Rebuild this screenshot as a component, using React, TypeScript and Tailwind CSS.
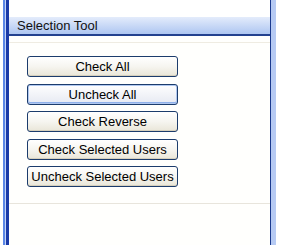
const buttons = [
  "Check All",
  "Uncheck All",
  "Check Reverse",
  "Check Selected Users",
  "Uncheck Selected Users",
];

const XpButton = ({ label, hot }: { label: string; hot?: boolean }) => (
  <button
    className={
      "w-[151px] h-[21px] rounded-[3px] border border-[#1c3c6c] text-[13px] leading-none text-black " +
      (hot
        ? "bg-gradient-to-b from-[#fefefe] to-[#e6e9f2] shadow-[inset_0_0_0_1px_#b0c8f0,inset_0_-1px_0_1px_#8fb0ea]"
        : "bg-gradient-to-b from-[#ffffff] via-[#f6f5f0] to-[#e9e6d8] shadow-[inset_0_-1px_0_#d6d0bd]")
    }
  >
    {label}
  </button>
);

export default function App() {
  return (
    <div className="w-[281px] h-[250px] bg-white font-['Liberation_Sans',Arial,sans-serif]">
      <div className="flex h-[245px]">
        <div className="w-[3px]" />
        <div className="w-[2px] bg-[#5a86e6]" />
        <div className="w-[1px] bg-[#c4d4f6]" />
        <div className="w-[3px] bg-[#1a3aa8]" />

        <div className="w-[261px] flex flex-col bg-[#fffffd]">
          <div className="h-[17px] bg-white" />
          <div className="h-[19px] border-b-2 border-[#23418f] bg-gradient-to-b from-[#e4ecfb] to-[#aec6f1] pl-[8px] flex items-center text-[13px] text-[#111]">
            Selection Tool
          </div>
          <div className="h-[6px]" />
          <div className="h-px bg-[#efece2]" />
          <div className="flex flex-col gap-[6.5px] pl-[18px] pt-[13px]">
            {buttons.map((b) => (
              <XpButton key={b} label={b} hot={b === "Uncheck All"} />
            ))}
          </div>
          <div className="h-[16px]" />
          <div className="h-px bg-[#e8e5dc]" />
        </div>

        <div className="w-[1px] bg-[#1a3a8e]" />
        <div className="w-[5px] bg-[#b6caf3]" />
      </div>
    </div>
  );
}
